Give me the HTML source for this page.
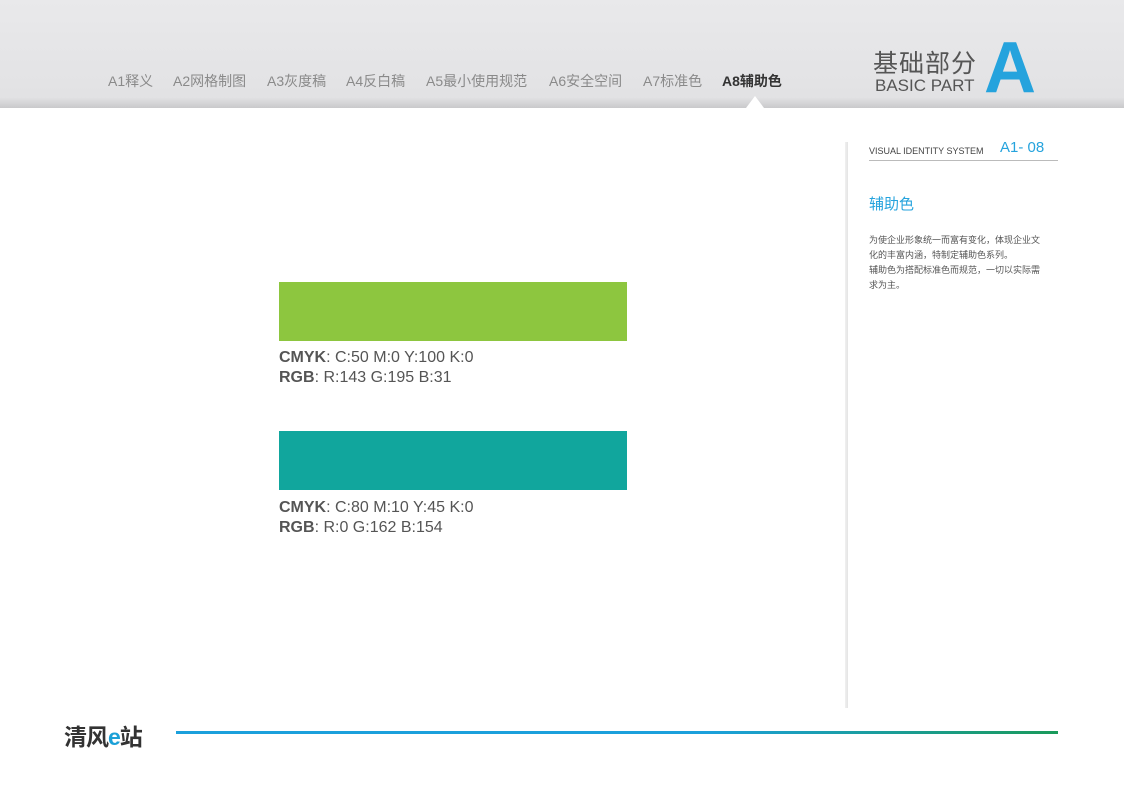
<!DOCTYPE html><html><head><meta charset="utf-8"><style>
body{margin:0;width:1124px;height:795px;position:relative;background:#fff;font-family:"Liberation Sans","Noto Sans CJK SC",sans-serif;overflow:hidden}
.hdr{position:absolute;left:0;top:0;width:1124px;height:108px;background:linear-gradient(#e9e9eb,#e2e2e4 90%,#c9c9cb)}
.nav{position:absolute;top:71px;font-size:14px;color:#8a8a8a;white-space:nowrap}
.nav span{position:absolute}
.a{position:absolute;white-space:nowrap}
</style></head><body>
<div class="hdr"></div>
<div style="position:absolute;left:746px;top:96px;width:0;height:0;border-left:9px solid transparent;border-right:9px solid transparent;border-bottom:12px solid #fff"></div>
<div class="nav">
<span style="left:108px">A1释义</span><span style="left:173px">A2网格制图</span><span style="left:267px">A3灰度稿</span><span style="left:346px">A4反白稿</span><span style="left:426px">A5最小使用规范</span><span style="left:549px">A6安全空间</span><span style="left:643px">A7标准色</span><span style="left:722px;color:#333;font-weight:bold">A8辅助色</span>
</div>
<div class="a" style="left:873px;top:44px;font-size:25px;color:#555;letter-spacing:1px">基础部分</div>
<div class="a" style="left:875px;top:76px;font-size:17px;color:#555">BASIC PART</div>
<div class="a" style="left:984px;top:38px;font-size:72px;line-height:60px;color:#25a3dd;font-weight:bold">A</div>
<div class="a" style="left:845px;top:142px;width:3px;height:566px;background:linear-gradient(90deg,#f0f0f0,#e4e4e4)"></div>
<div class="a" style="left:869px;top:146px;font-size:9px;color:#444">VISUAL IDENTITY SYSTEM</div>
<div class="a" style="left:1000px;top:139px;font-size:15px;color:#25a3dd">A1- 08</div>
<div class="a" style="left:869px;top:160px;width:189px;height:1px;background:#bbb"></div>
<div class="a" style="left:869px;top:193px;font-size:15px;color:#25a3dd">辅助色</div>
<div class="a" style="left:869px;top:233px;font-size:9px;line-height:15px;color:#555">为使企业形象统一而富有变化，体现企业文<br>化的丰富内涵，特制定辅助色系列。<br>辅助色为搭配标准色而规范，一切以实际需<br>求为主。</div>
<div class="a" style="left:279px;top:282px;width:348px;height:59px;background:#8dc63f"></div>
<div class="a" style="left:279px;top:348px;font-size:16px;line-height:20px;color:#555"><b>CMYK</b>: C:50 M:0 Y:100 K:0<br><b>RGB</b>: R:143 G:195 B:31</div>
<div class="a" style="left:279px;top:431px;width:348px;height:59px;background:#11a69d"></div>
<div class="a" style="left:279px;top:498px;font-size:16px;line-height:20px;color:#555"><b>CMYK</b>: C:80 M:10 Y:45 K:0<br><b>RGB</b>: R:0 G:162 B:154</div>
<div class="a" style="left:64px;top:718px;font-size:23px;font-weight:bold;color:#333;letter-spacing:-1px">清风<span style="color:#1ba0d7">e</span>站</div>
<div class="a" style="left:176px;top:731px;width:882px;height:3px;background:linear-gradient(90deg,#1ba0dc,#1ba0dc 60%,#1a9a5a)"></div>
</body></html>
